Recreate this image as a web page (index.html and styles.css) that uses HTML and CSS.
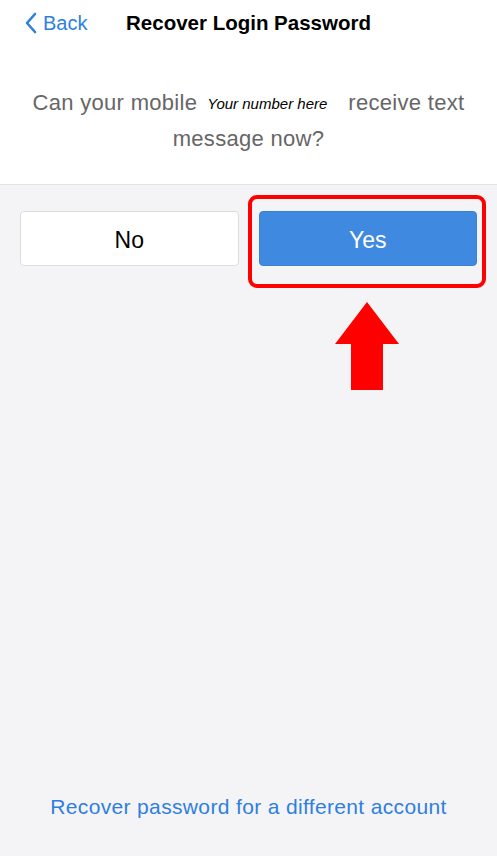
FILE: index.html
```html
<!DOCTYPE html>
<html lang="en">
<head>
    <meta charset="UTF-8">
    <meta name="viewport" content="width=device-width, initial-scale=1.0">
    <title>Recover Login Password</title>
    <link rel="stylesheet" href="styles.css">
</head>
<body>
    <div class="page">
        <div class="top">
            <div class="nav-bar">
                <a class="back-link" href="#">
                    <svg class="back-icon" width="14" height="22" viewBox="0 0 14 22">
                        <path d="M11 2 L3 11 L11 20" fill="none" stroke="currentColor" stroke-width="2.6" stroke-linecap="round" stroke-linejoin="round"/>
                    </svg>
                    <span>Back</span>
                </a>
                <div class="nav-title">Recover Login Password</div>
                <div></div>
            </div>

            <p class="question">
                <span>Can your mobile</span><span class="number">Your number here</span><span>receive text</span>
                <span>message now?</span>
            </p>
        </div>

        <div class="choices">
            <button class="choice choice-no">No</button>
            <div class="choice-wrap">
                <button class="choice choice-yes">Yes</button>
                <div class="highlight"></div>
                <svg class="arrow" width="66" height="90" viewBox="0 0 66 90">
                    <polygon points="33,0 65,42 49,42 49,88 17,88 17,42 1,42" fill="#ff0000"/>
                </svg>
            </div>
        </div>

        <div class="footer">
            <a class="other-account" href="#">Recover password for a different account</a>
        </div>
    </div>
</body>
</html>
```

FILE: styles.css
```css
* {
    margin: 0;
    padding: 0;
    box-sizing: border-box;
}

body {
    font-family: "Liberation Sans", Arial, sans-serif;
    background: #f4f4f7;
    color: #000;
}

.page {
    min-height: 100vh;
    display: flex;
    flex-direction: column;
}

.top {
    background: #fff;
    border-bottom: 1px solid #e3e3e6;
    height: 185px;
}

.nav-bar {
    display: grid;
    grid-template-columns: 1fr auto 1fr;
    align-items: center;
    height: 46px;
    padding: 0 24px;
}

.back-link {
    display: flex;
    align-items: center;
    gap: 5px;
    color: #2e7fdf;
    text-decoration: none;
    font-size: 20px;
}

.back-icon {
    display: block;
}

.nav-title {
    font-size: 20.5px;
    font-weight: bold;
    color: #000;
}

.question {
    margin-top: 39px;
    padding: 0 18px;
    text-align: center;
    font-size: 22px;
    letter-spacing: 0.3px;
    line-height: 35px;
    color: #666;
}

.number {
    display: inline-block;
    margin: 0 21px 0 10px;
    font-size: 15px;
    font-style: italic;
    letter-spacing: 0;
    color: #000;
    vertical-align: 1px;
}

.choices {
    display: grid;
    grid-template-columns: 1fr 1fr;
    gap: 20px;
    padding: 26px 20px 0;
}

.choice {
    width: 100%;
    height: 55px;
    padding-top: 3px;
    border-radius: 4px;
    font-family: inherit;
    font-size: 23px;
}

.choice-no {
    background: #fff;
    border: 1px solid #dcdcdc;
    color: #000;
}

.choice-wrap {
    position: relative;
}

.choice-yes {
    background: #3f8ae0;
    border: 1px solid #3a82d6;
    color: #fff;
}

.highlight {
    position: absolute;
    top: -16px;
    left: -11px;
    right: -9px;
    bottom: -22px;
    border: 4px solid #ff0000;
    border-radius: 9px;
}

.arrow {
    position: absolute;
    top: 91px;
    left: 75px;
}

.footer {
    margin-top: auto;
    padding-bottom: 37px;
    text-align: center;
}

.other-account {
    font-size: 21px;
    letter-spacing: 0.35px;
    line-height: 24px;
    color: #2e7fdf;
    text-decoration: none;
}
```
